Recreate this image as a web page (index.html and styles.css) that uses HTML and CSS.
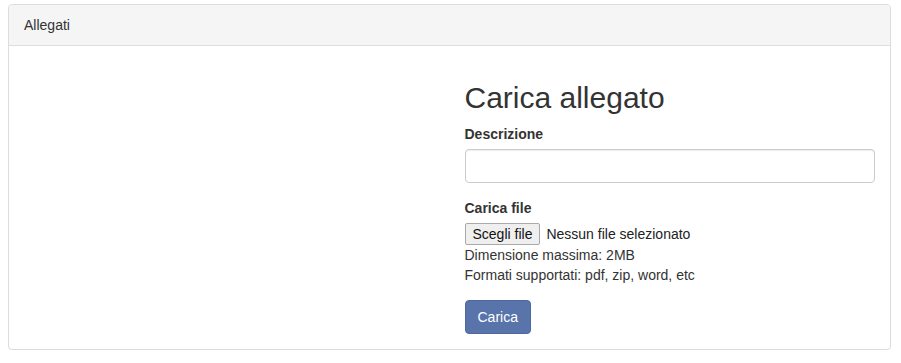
FILE: index.html
```html
<!DOCTYPE html>
<html lang="it">
<head>
  <meta charset="UTF-8" />
  <title>Allegati</title>
  <link rel="stylesheet" href="styles.css">
</head>
<body>

<div class="pannello">
  <div class="pannello-titolo">Allegati</div>

  <div class="pannello-corpo">
    <div class="colonna"></div>

    <!-- Form di caricamento -->
    <form class="colonna">
      <h2>Carica allegato</h2>

      <div class="gruppo">
        <label for="descrizione">Descrizione</label>
        <input type="text" id="descrizione" class="campo">
      </div>

      <div class="gruppo">
        <label>Carica file</label>
        <div class="file-riga">
          <span class="file-bottone">Scegli file</span>
          <span>Nessun file selezionato</span>
        </div>
        <p class="nota">Dimensione massima: 2MB</p>
        <p class="nota">Formati supportati: pdf, zip, word, etc</p>
      </div>

      <button type="button" class="btn-carica">Carica</button>
    </form>
  </div>
</div>

</body>
</html>
```

FILE: styles.css
```css
/* Reset base */
* {
  margin: 0;
  padding: 0;
  box-sizing: border-box;
}

body {
  font-family: 'Liberation Sans', Arial, sans-serif;
  font-size: 14px;
  line-height: 20px;
  color: #333;
  background: #fff;
  padding: 4px 10px 0 8px;
}

.pannello {
  border: 1px solid #ddd;
  border-radius: 4px;
  box-shadow: 0 1px 1px rgba(0,0,0,0.05);
}

.pannello-titolo {
  background: #f5f5f5;
  border-bottom: 1px solid #ddd;
  border-radius: 3px 3px 0 0;
  padding: 10px 15px;
}

.pannello-corpo {
  display: flex;
  padding: 15px 0;
}

.colonna {
  width: 50%;
  padding: 0 15px;
}

h2 {
  font-size: 30px;
  font-weight: 500;
  line-height: 1.1;
  margin: 20px 0 10px;
}

.gruppo {
  margin-bottom: 15px;
}

label {
  display: block;
  font-weight: bold;
  margin-bottom: 5px;
}

.campo {
  display: block;
  width: 100%;
  height: 34px;
  padding: 6px 12px;
  font: inherit;
  border: 1px solid #ccc;
  border-radius: 4px;
  box-shadow: inset 0 1px 1px rgba(0,0,0,0.075);
}

.file-riga {
  display: flex;
  align-items: center;
  gap: 6px;
  font-size: 14px;
  color: #222;
  height: 22px;
}

.file-bottone {
  display: inline-block;
  line-height: 20px;
  padding: 0 7px;
  background: #efefef;
  border: 1px solid #a9a9a9;
  border-radius: 2px;
  color: #111;
}

.nota {
  font-size: 14px;
  line-height: 20px;
  color: #333;
}

.btn-carica {
  display: inline-block;
  padding: 6px 12px;
  font: inherit;
  line-height: 20px;
  color: #fff;
  background: #5874ab;
  border: 1px solid #4d68a0;
  border-radius: 4px;
  width: 66px;
  height: 34px;
  cursor: pointer;
}
```
